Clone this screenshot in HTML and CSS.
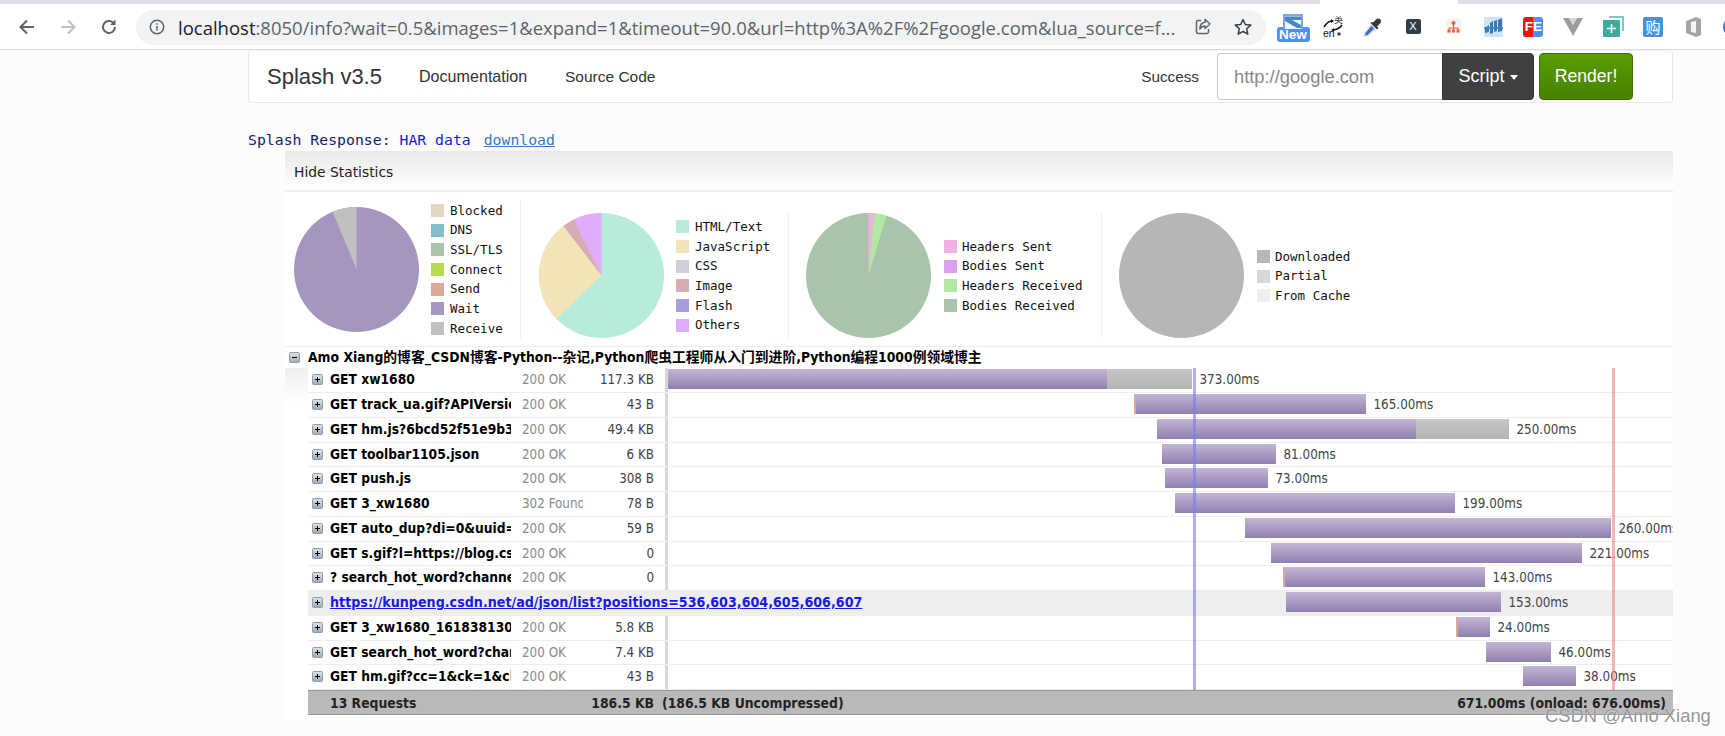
FILE: index.html
```html
<!DOCTYPE html>
<html lang="en">
<head>
<meta charset="utf-8">
<title>Splash HAR</title>
<link rel="stylesheet" href="styles.css">
</head>
<body>
<svg class="defs" width="0" height="0" aria-hidden="true">
  <defs>
    <linearGradient id="boxfill" x1="0" y1="0" x2="0" y2="1"><stop offset="0" stop-color="#dfe3e8"/><stop offset="1" stop-color="#9da8b4"/></linearGradient>
    <symbol id="plus" viewBox="0 0 11 11"><rect x=".5" y=".5" width="10" height="10" rx="1" fill="url(#boxfill)" stroke="#8f9cab"/><path d="M3 5.500h5M5.500 3v5" stroke="#000" stroke-width="1"/></symbol>
    <symbol id="minus" viewBox="0 0 11 11"><rect x=".5" y=".5" width="10" height="10" rx="1" fill="url(#boxfill)" stroke="#8f9cab"/><path d="M3 5.500h5" stroke="#000" stroke-width="1"/></symbol>
  </defs>
</svg>
<header class="chrome">
  <div class="tabstrip"><span class="strip strip-a"></span><span class="strip-gap"></span><span class="strip strip-b"></span></div>
  <div class="toolbar">
    <svg class="nav-ico first" width="20" height="20" viewBox="0 0 20 20"><path d="M17 10H4M10 3.500 3.500 10l6.500 6.500" fill="none" stroke="#5f6368" stroke-width="2"/></svg>
    <svg class="nav-ico" width="20" height="20" viewBox="0 0 20 20"><path d="M3 10h13M10 3.500 16.500 10 10 16.500" fill="none" stroke="#bdc1c6" stroke-width="2"/></svg>
    <svg class="nav-ico" width="20" height="20" viewBox="0 0 20 20"><path d="M16 10a6 6 0 1 1-1.800-4.300" fill="none" stroke="#5f6368" stroke-width="2"/><path d="M16.500 2.500v5.500h-5.500z" fill="#5f6368"/></svg>
    <div class="omnibox">
      <svg class="info" width="16" height="16" viewBox="0 0 16 16"><circle cx="8" cy="8" r="6.700" fill="none" stroke="#5f6368" stroke-width="1.500"/><path d="M8 7v4.500M8 4.300v1.500" stroke="#5f6368" stroke-width="1.500"/></svg>
      <span class="url"><b class="host">localhost</b>:8050/info?wait=0.5&amp;images=1&amp;expand=1&amp;timeout=90.0&amp;url=http%3A%2F%2Fgoogle.com&amp;lua_source=f...</span>
      <svg class="share" width="20" height="20" viewBox="0 0 20 20"><path d="M8 3.500H5a1.500 1.500 0 0 0-1.500 1.500v10A1.500 1.500 0 0 0 5 16.500h9a1.500 1.500 0 0 0 1.500-1.500v-3" fill="none" stroke="#5f6368" stroke-width="1.500"/><path d="M17 7 12 2.500v2.700C8.500 5.500 7 8 6.800 12c1.500-2.300 3-3 5.200-3v2.500z" fill="none" stroke="#5f6368" stroke-width="1.500" stroke-linejoin="round"/></svg>
      <svg class="star" width="20" height="20" viewBox="0 0 20 20"><path d="m10 2.500 2.300 5 5.400.6-4 3.700 1.100 5.400-4.800-2.700-4.800 2.700 1.100-5.400-4-3.700 5.400-.6z" fill="none" stroke="#3c4043" stroke-width="1.500" stroke-linejoin="round"/></svg>
    </div>
    <div class="exts">
      <span class="slot"><span class="ext-new">
        <svg class="new-top" width="20" height="15" viewBox="0 0 20 15"><rect width="20" height="15" fill="#7fa8d6"/><rect x="2" y="2" width="16" height="13" fill="#eef4fb"/><path d="M2 2.500h16v3.500H9l9 5v3h-4L2 7z" fill="#4a86c8"/></svg>
        <b class="new-badge">New</b>
      </span></span>
      <span class="slot"><svg width="22" height="22" viewBox="0 0 22 22"><path d="M2 11q3-5 7-6M20 9q-3 4-8 5" fill="none" stroke="#111" stroke-width="1.600"/><path d="m9 3 3 2-3 2zM12 12l-3 2 3 2z" fill="#111"/><text x="12" y="7" class="ext-t">英</text><text x="1" y="21" class="ext-e">en</text><circle cx="17" cy="18" r="1.800" fill="#444"/></svg></span>
      <span class="slot"><svg width="20" height="20" viewBox="0 0 20 20"><path d="M8 7l5 5-8 7-3.500 1-1-1 1-3.500z" fill="#cfd6e6"/><path d="M8.500 9 11 11.500 4.500 18l-2.200.3.300-2.200z" fill="#3f66cc"/><path d="M7.500 6 14 12.500l1.500-1.500-1.500-1.500 3-3c3-3-1-7-4-4l-3 3L8.500 5z" fill="#333b44"/></svg></span>
      <span class="slot"><span class="ext-x">X</span></span>
      <span class="slot"><svg width="15" height="15" viewBox="0 0 15 15"><rect width="15" height="15" rx="2" fill="#f4f1ef"/><circle cx="7.500" cy="4" r="2" fill="#e8603c"/><path d="M7.500 6v3M3 11V9h9v2M7.500 9v2" fill="none" stroke="#e8603c" stroke-width="1.100"/><rect x="1.500" y="10.500" width="3" height="3" fill="#e8603c"/><rect x="6" y="10.500" width="3" height="3" fill="#e8603c"/><rect x="10.500" y="10.500" width="3" height="3" fill="#e8603c"/></svg></span>
      <span class="slot"><svg width="19" height="20" viewBox="0 0 19 20"><rect width="19" height="20" fill="#cfe4f2"/><path d="M1 11l4-3v7l-4 1zM6 6l3-2v12l-3 1zM10 4l3-1v11l-3 1zM14 3l4-2v13l-4 1z" fill="#3d77b6"/><path d="M0 11h19" stroke="#1e8ec9" stroke-width="1.500"/></svg></span>
      <span class="slot"><span class="ext-fe"><i class="fe-f">F</i><i class="fe-e">E</i></span></span>
      <span class="slot"><svg width="20" height="18" viewBox="0 0 20 18"><path d="M0 0h6l4 7 4-7h6L10 18z" fill="#9d9d9d"/><path d="M6 0h8l-4 7z" fill="#d8d8d8"/></svg></span>
      <span class="slot"><svg width="21" height="21" viewBox="0 0 21 21"><path d="M6 0h15v15h-2V2H6z" fill="#7ec8bd"/><rect y="4" width="17" height="17" rx="1" fill="#3cab9c"/><path d="M8.500 8v9M4 12.500h9" stroke="#fff" stroke-width="1.600"/></svg></span>
      <span class="slot"><span class="ext-buy">购</span></span>
      <span class="slot"><svg width="17" height="20" viewBox="0 0 17 20"><path d="M11 0 1 4v12l10 4 5-2V2z" fill="#a5a5a5"/><path d="M11 4v12L6 15V5z" fill="#f4f4f4"/></svg></span>
      <span class="slot"><span class="ext-edge"></span></span>
    </div>
  </div>
</header>

<main class="page">
  <nav class="navbar">
    <a class="brand">Splash v3.5</a>
    <a class="nav-link nl-doc">Documentation</a>
    <a class="nav-link nl-src">Source Code</a>
    <span class="status-text">Success</span>
    <span class="url-input">http://google.com</span>
    <span class="btn btn-script">Script <i class="caret"></i></span>
    <span class="btn btn-render">Render!</span>
  </nav>

  <p class="response"><span class="r-dark">Splash Response:</span> <span class="r-blue">HAR data</span> <a class="r-link">download</a></p>

  <section class="har">
    <div class="hide-stats">Hide Statistics</div>
    <div class="stats">
      <div class="stat stat-1">
        <svg class="pie" width="125" height="125" viewBox="-62.500 -62.500 125 125"><circle r="62.500" fill="#a496be"/><path d="M0 0V-62.500A62.500 62.500 0 0 0-23.900-57.700z" fill="#c0c0c0"/></svg>
        <ul class="legend">
          <li><i class="sw" style="background:#e1d6c0"></i>Blocked</li>
          <li><i class="sw" style="background:#81bfcb"></i>DNS</li>
          <li><i class="sw" style="background:#aac4ac"></i>SSL/TLS</li>
          <li><i class="sw" style="background:#b5dc4f"></i>Connect</li>
          <li><i class="sw" style="background:#dba99a"></i>Send</li>
          <li><i class="sw" style="background:#a496be"></i>Wait</li>
          <li><i class="sw" style="background:#c0c0c0"></i>Receive</li>
        </ul>
      </div>
      <div class="stat stat-2">
        <svg class="pie" width="125" height="125" viewBox="-62.500 -62.500 125 125"><circle r="62.500" fill="#b7ebdb"/><path d="M0 0-45.200 43.200A62.500 62.500 0 0 1-38-49.600z" fill="#f4e5b9"/><path d="M0 0-38-49.600A62.500 62.500 0 0 1-27.500-56.100z" fill="#d9abb3"/><path d="M0 0-27.500-56.100A62.500 62.500 0 0 1 0-62.500z" fill="#e0acfc"/></svg>
        <ul class="legend">
          <li><i class="sw" style="background:#b7ebdb"></i>HTML/Text</li>
          <li><i class="sw" style="background:#f4e5b9"></i>JavaScript</li>
          <li><i class="sw" style="background:#d3cdda"></i>CSS</li>
          <li><i class="sw" style="background:#d9abb3"></i>Image</li>
          <li><i class="sw" style="background:#a99cdc"></i>Flash</li>
          <li><i class="sw" style="background:#e0acfc"></i>Others</li>
        </ul>
      </div>
      <div class="stat stat-3">
        <svg class="pie" width="125" height="125" viewBox="-62.500 -62.500 125 125"><circle r="62.500" fill="#aac4ac"/><path d="M0 0V-62.500A62.500 62.500 0 0 1 5.700-62.200z" fill="#f3b1e1"/><path d="M0 0 5.700-62.200A62.500 62.500 0 0 1 18-59.800z" fill="#b0e8a4"/></svg>
        <ul class="legend">
          <li><i class="sw" style="background:#f3b1e1"></i>Headers Sent</li>
          <li><i class="sw" style="background:#dca0ee"></i>Bodies Sent</li>
          <li><i class="sw" style="background:#b0e8a4"></i>Headers Received</li>
          <li><i class="sw" style="background:#aac4ac"></i>Bodies Received</li>
        </ul>
      </div>
      <div class="stat stat-4">
        <svg class="pie" width="125" height="125" viewBox="-62.500 -62.500 125 125"><circle r="62.500" fill="#b6b6b6"/></svg>
        <ul class="legend">
          <li><i class="sw" style="background:#b6b6b6"></i>Downloaded</li>
          <li><i class="sw" style="background:#d8d8d8"></i>Partial</li>
          <li><i class="sw" style="background:#eeeeee"></i>From Cache</li>
        </ul>
      </div>
    </div>

    <div class="page-row"><svg class="tree-ico" width="11" height="11"><use href="#minus"/></svg><span class="page-title">Amo Xiang的博客_CSDN博客-Python--杂记,Python爬虫工程师从入门到进阶,Python编程1000例领域博主</span></div>

    <div class="requests">
      <div class="rows">
        <div class="row"><svg class="tree-ico" width="11" height="11"><use href="#plus"/></svg><span class="name">GET xw1680</span><span class="st">200 OK</span><span class="size">117.3 KB</span><div class="tl"><div class="bar" style="margin-left:0"><i class="wait" style="width:439px"></i><i class="recv" style="width:85px"></i></div><span class="ms">373.00ms</span></div></div>
        <div class="row"><svg class="tree-ico" width="11" height="11"><use href="#plus"/></svg><span class="name">GET track_ua.gif?APIVersion=0.6.0</span><span class="st">200 OK</span><span class="size">43 B</span><div class="tl"><div class="bar" style="margin-left:466px"><i class="send"></i><i class="wait" style="width:230px"></i></div><span class="ms">165.00ms</span></div></div>
        <div class="row"><svg class="tree-ico" width="11" height="11"><use href="#plus"/></svg><span class="name">GET hm.js?6bcd52f51e9b3dce32bec4a3997715ac</span><span class="st">200 OK</span><span class="size">49.4 KB</span><div class="tl"><div class="bar" style="margin-left:489px"><i class="wait" style="width:259px"></i><i class="recv" style="width:93px"></i></div><span class="ms">250.00ms</span></div></div>
        <div class="row"><svg class="tree-ico" width="11" height="11"><use href="#plus"/></svg><span class="name">GET toolbar1105.json</span><span class="st">200 OK</span><span class="size">6 KB</span><div class="tl"><div class="bar" style="margin-left:494px"><i class="wait" style="width:114px"></i></div><span class="ms">81.00ms</span></div></div>
        <div class="row"><svg class="tree-ico" width="11" height="11"><use href="#plus"/></svg><span class="name">GET push.js</span><span class="st">200 OK</span><span class="size">308 B</span><div class="tl"><div class="bar" style="margin-left:497px"><i class="wait" style="width:103px"></i></div><span class="ms">73.00ms</span></div></div>
        <div class="row"><svg class="tree-ico" width="11" height="11"><use href="#plus"/></svg><span class="name">GET 3_xw1680</span><span class="st">302 Found</span><span class="size">78 B</span><div class="tl"><div class="bar" style="margin-left:507px"><i class="wait" style="width:280px"></i></div><span class="ms">199.00ms</span></div></div>
        <div class="row"><svg class="tree-ico" width="11" height="11"><use href="#plus"/></svg><span class="name">GET auto_dup?di=0&amp;uuid=1618381</span><span class="st">200 OK</span><span class="size">59 B</span><div class="tl"><div class="bar" style="margin-left:577px"><i class="wait" style="width:366px"></i></div><span class="ms">260.00ms</span></div></div>
        <div class="row"><svg class="tree-ico" width="11" height="11"><use href="#plus"/></svg><span class="name">GET s.gif?l=https://blog.csdn.net</span><span class="st">200 OK</span><span class="size">0</span><div class="tl"><div class="bar" style="margin-left:603px"><i class="wait" style="width:311px"></i></div><span class="ms">221.00ms</span></div></div>
        <div class="row"><svg class="tree-ico" width="11" height="11"><use href="#plus"/></svg><span class="name">? search_hot_word?channel</span><span class="st">200 OK</span><span class="size">0</span><div class="tl"><div class="bar" style="margin-left:615px"><i class="send"></i><i class="wait" style="width:200px"></i></div><span class="ms">143.00ms</span></div></div>
        <div class="row row-link"><svg class="tree-ico" width="11" height="11"><use href="#plus"/></svg><a class="name">https://kunpeng.csdn.net/ad/json/list?positions=536,603,604,605,606,607</a><div class="tl"><div class="bar" style="margin-left:618px"><i class="wait" style="width:215px"></i></div><span class="ms">153.00ms</span></div></div>
        <div class="row"><svg class="tree-ico" width="11" height="11"><use href="#plus"/></svg><span class="name">GET 3_xw1680_1618381300</span><span class="st">200 OK</span><span class="size">5.8 KB</span><div class="tl"><div class="bar" style="margin-left:788px"><i class="send"></i><i class="wait" style="width:32px"></i></div><span class="ms">24.00ms</span></div></div>
        <div class="row"><svg class="tree-ico" width="11" height="11"><use href="#plus"/></svg><span class="name">GET search_hot_word?channel</span><span class="st">200 OK</span><span class="size">7.4 KB</span><div class="tl"><div class="bar" style="margin-left:818px"><i class="wait" style="width:65px"></i></div><span class="ms">46.00ms</span></div></div>
        <div class="row"><svg class="tree-ico" width="11" height="11"><use href="#plus"/></svg><span class="name">GET hm.gif?cc=1&amp;ck=1&amp;cl=24-bit</span><span class="st">200 OK</span><span class="size">43 B</span><div class="tl"><div class="bar" style="margin-left:855px"><i class="wait" style="width:53px"></i></div><span class="ms">38.00ms</span></div></div>
        <span class="marker marker-blue"></span>
        <span class="marker marker-red"></span>
        <div class="summary"><span class="sum-count">13 Requests</span><span class="sum-size">186.5 KB</span><span class="sum-raw">(186.5 KB Uncompressed)</span><span class="sum-time">671.00ms (onload: 676.00ms)</span></div>
      </div>
    </div>
  </section>
</main>
<div class="watermark">CSDN @Amo Xiang</div>
</body>
</html>
```

FILE: styles.css
```css
* { box-sizing: border-box; }
html, body { margin: 0; padding: 0; height: 736px; overflow: hidden; }
body { background: #fcfcfc; font-family: "Liberation Sans", sans-serif; color: #222; position: relative; }
.defs { display: block; height: 0; }

/* Browser chrome */
.chrome { background: #fff; height: 50px; border-bottom: 1px solid #dadce0; }
.tabstrip { display: flex; height: 4px; }
.strip { background: #dee1e6; }
.strip-a { width: 1320px; }
.strip-gap { width: 138px; }
.strip-b { flex: 1; }
.toolbar { display: flex; align-items: center; height: 45px; }
.nav-ico { flex: none; margin-right: 21px; }
.nav-ico.first { margin-left: 17px; }
.omnibox { display: flex; align-items: center; flex: none; width: 1130px; height: 35px; margin-left: -4px; margin-top: 1px; border-radius: 18px; background: #f1f3f4; padding-left: 13px; }
.info { flex: none; margin-right: 13px; }
.url { font: 18.500px/35px "Open Sans", sans-serif; color: #5f6368; white-space: nowrap; width: 1001px; flex: none; }
.host { font-weight: 400; color: #202124; }
.share { flex: none; margin-left: 14px; }
.star { flex: none; margin-left: 20px; }
.exts { display: flex; flex: none; align-items: center; height: 45px; padding-left: 7px; }
.slot { flex: none; display: flex; align-items: center; justify-content: center; width: 40px; height: 45px; }
.ext-new { display: block; width: 33px; height: 28px; margin-top: 2px; text-align: center; }
.new-top { display: block; margin: 0 auto; }
.new-badge { display: block; margin-top: -2px; height: 15px; font: bold 13.500px/15px "Liberation Sans", sans-serif; color: #fff; background: #4f8ff0; border-radius: 3px; }
.ext-t { font: 9px "Noto Sans CJK SC", sans-serif; fill: #111; }
.ext-e { font: 10.500px "Liberation Sans", sans-serif; fill: #111; }
.ext-x { display: block; width: 15px; height: 15px; border-radius: 2px; background: #2f3f4a; color: #fff; font: 11px/15px "Liberation Sans", sans-serif; text-align: center; }
.ext-fe { display: flex; width: 20px; height: 20px; border-radius: 3px; overflow: hidden; font: bold 13.500px/20px "Liberation Sans", sans-serif; color: #fff; }
.fe-f { flex: 1; background: #e8170d; text-align: right; font-style: normal; }
.fe-e { flex: 1; background: #4f8ff0; text-align: left; font-style: normal; }
.ext-buy { display: block; width: 20px; height: 20px; border-radius: 2px; background: #4a90e2; color: #fff; font: 15px/20px "Noto Sans CJK SC", sans-serif; text-align: center; }
.ext-edge { display: block; width: 20px; height: 20px; border-radius: 50%; background: #3b7ed6; }

/* Page */
.page { padding-left: 248px; width: 1673px; }
.navbar { display: flex; align-items: center; height: 53px; padding: 0 39px 0 18px; background: #fff; border: 1px solid #e7e7e7; border-top-color: #f0f0f0; border-radius: 4px; font-size: 16px; color: #333; }
.brand { font-size: 22px; width: 152px; color: #333; }
.nav-link { color: #333; }
.nl-doc { width: 146px; font-size: 16.100px; }
.nl-src { font-size: 15.500px; }
.status-text { margin-left: auto; margin-right: 18px; font-size: 15.300px; }
.url-input { width: 225px; height: 47px; line-height: 45px; padding-left: 16px; border: 1px solid #ccc; border-right: 0; border-radius: 4px 0 0 4px; background: #fff; color: #888; font-size: 18.300px; }
.btn { height: 47px; line-height: 45px; text-align: center; color: #fff; font-size: 18px; border-radius: 0 4px 4px 0; }
.btn-script { width: 92px; background: #3f4140; border: 1px solid #333; }
.caret { display: inline-block; vertical-align: middle; width: 0; height: 0; border-left: 4.500px solid transparent; border-right: 4.500px solid transparent; border-top: 5px solid #fff; }
.btn-render { width: 94px; margin-left: 5px; border-radius: 4px; background: linear-gradient(#589c00, #478200); border: 1px solid #3e7200; font-size: 17.600px; }

.response { margin: 0; height: 48px; padding-top: 26px; font: 14.800px/21px "DejaVu Sans Mono", monospace; white-space: pre; }
.r-dark { color: #1a1a6a; }
.r-blue { color: #1a1ac8; }
.r-link { color: #3b78b8; text-decoration: underline; margin-left: 4px; }

.har { margin-left: 37px; width: 1388px; height: 569px; background: #fff; color: #111; }
.hide-stats { height: 41px; padding: 10px 0 0 9px; border-bottom: 2px solid #eee; background: linear-gradient(#e8e9e9, #fff); font: 13.850px/22px "DejaVu Sans", sans-serif; color: #222; }

.stats { display: flex; align-items: flex-end; height: 155px; padding-bottom: 8px; border-bottom: 1px solid #eee; }
.stat { display: flex; align-items: center; border-right: 1px solid #eee; }
.stat-1 { width: 236px; height: 138px; padding-left: 9px; }
.stat-2 { width: 268px; height: 125px; padding-left: 18px; }
.stat-3 { width: 313px; height: 125px; padding-left: 17px; }
.stat-4 { flex: 1; height: 125px; padding-left: 17px; border-right: 0; }
.pie { flex: none; display: block; }
.legend { list-style: none; margin: 1px 0 0 12px; padding: 0; font: 12.500px/19.670px "DejaVu Sans Mono", monospace; color: #111; }
.stat-3 .legend, .stat-4 .legend { margin-left: 13px; }
.legend li { display: flex; align-items: center; height: 19.670px; white-space: pre; }
.sw { flex: none; width: 13px; height: 13px; margin-right: 6px; }
.stat-3 .sw, .stat-4 .sw { margin-right: 5px; }

.page-row { display: flex; align-items: center; height: 21.400px; padding-left: 4px; font: bold 13.800px/21px "DejaVu Sans", "Noto Sans CJK SC", sans-serif; font-stretch: condensed; color: #000; }
.page-title { margin-left: 8px; white-space: nowrap; }
.tree-ico { flex: none; display: block; }

.requests { padding-left: 23px; background: linear-gradient(#eee, #fff 34px); }
.rows { position: relative; background: #fff; }
.row { display: flex; height: 24.750px; border-bottom: 1px solid #eee; font: 13.300px/23px "DejaVu Sans", sans-serif; font-stretch: condensed; white-space: nowrap; }
.row > .tree-ico { margin: 6px 7px 0 4px; }
.name { width: 181px; overflow: hidden; font-weight: bold; font-size: 13.700px; color: #000; }
.st { width: 61px; margin-left: 11px; overflow: hidden; color: #8a8a8a; }
.size { width: 71px; text-align: right; color: #444; margin-right: 11px; }
.tl { flex: 1; display: flex; min-width: 0; overflow: hidden; border-left: 3px solid #d8d8d8; padding-top: 1px; color: #444; }
.bar { flex: none; display: flex; height: 20px; }
.bar i { display: block; height: 20px; }
.wait { background: linear-gradient(#c2b6d4, #9080b2); }
.recv { background: linear-gradient(#c6c6c6, #b4b4b4); }
.send { width: 2px; background: #dba99a; }
.ms { flex: none; margin-left: 7.500px; line-height: 22px; }
.row-link { background: #eee; border-bottom: 0; }
.row-link .name { flex: none; width: 335px; overflow: visible; font-size: 14.150px; color: #1a1ae0; text-decoration: underline; }
.row-link .tl { border-left-color: transparent; }

.marker { position: absolute; top: 0; height: 321.750px; width: 3px; }
.marker-blue { left: 885px; background: rgba(120, 120, 255, .6); }
.marker-red { left: 1304px; background: rgba(240, 130, 130, .6); }

.summary { display: flex; height: 25px; padding-left: 22px; background: #b9b9b9; border-top: 1px solid #999; border-bottom: 1px solid #999; font: bold 13.800px/24px "DejaVu Sans", sans-serif; font-stretch: condensed; color: #222; white-space: nowrap; }
.sum-count { width: 181px; }
.sum-size { width: 143px; text-align: right; }
.sum-raw { margin-left: 8px; }
.sum-time { margin-left: auto; margin-right: 7px; }

.watermark { position: absolute; left: 1545px; top: 705px; font: 18.400px/22px "Liberation Sans", sans-serif; color: rgba(130, 130, 130, .85); text-shadow: 0 0 1px #fff; white-space: nowrap; }
```
